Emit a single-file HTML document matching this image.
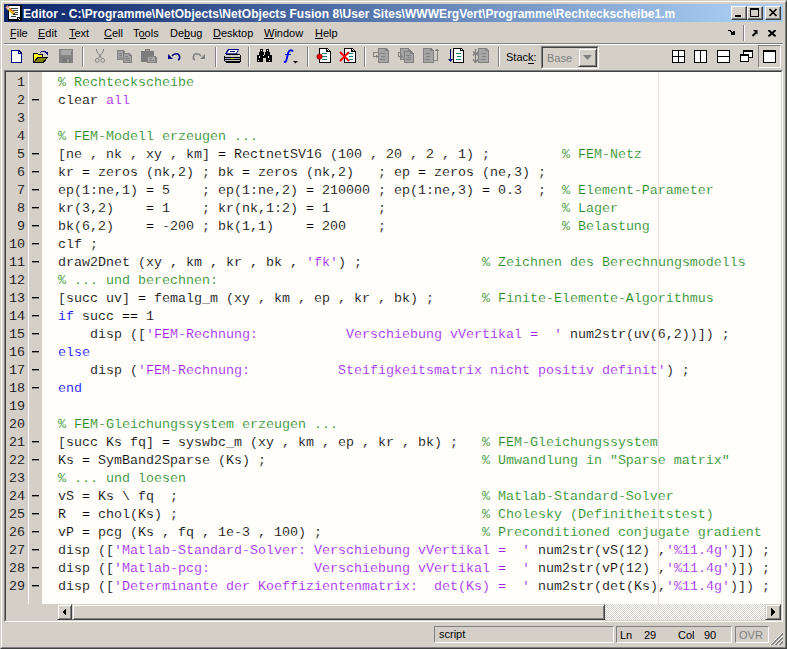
<!DOCTYPE html>
<html><head><meta charset="utf-8">
<style>
*{margin:0;padding:0;box-sizing:border-box}
html,body{width:787px;height:649px;overflow:hidden;background:#D4D0C8;font-family:"Liberation Sans",sans-serif}
.a{position:absolute}
#frame{left:0;top:0;width:787px;height:649px;border-top:1px solid #D4D0C8;border-left:1px solid #D4D0C8;border-right:1px solid #404040;border-bottom:1px solid #404040}
#frame2{left:1px;top:1px;width:785px;height:647px;border-top:1px solid #fff;border-left:1px solid #fff;border-right:1px solid #808080;border-bottom:1px solid #808080}
#title{left:4px;top:4px;width:779px;height:18px;background:linear-gradient(to right,#0A246A 0px,#A6CAF0 730px)}
#ttext{left:23px;top:4.5px;height:18px;line-height:18px;color:#fff;font-weight:bold;font-size:12px;letter-spacing:0.04px;white-space:nowrap}
.tb{width:16px;height:14px;top:6px;background:#D4D0C8;border-top:1px solid #fff;border-left:1px solid #fff;border-right:1px solid #404040;border-bottom:1px solid #404040;box-shadow:inset -1px -1px 0 #808080}
.menu{top:22.6px;height:20px;line-height:20px;font-size:11px;color:#000;white-space:nowrap}
.menu u{text-decoration:none;border-bottom:1px solid #000}
#etch{left:4px;top:43px;width:779px;height:2px;border-top:1px solid #808080;border-bottom:1px solid #fff}
.sep{top:47px;width:2px;height:20px;border-left:1px solid #808080;border-right:1px solid #fff}
#editor{left:4px;top:70px;width:779px;height:552px;border-top:1px solid #808080;border-left:1px solid #808080;border-right:1px solid #fff;border-bottom:1px solid #fff}
#editor2{left:5px;top:71px;width:777px;height:550px;border-top:1px solid #404040;border-left:1px solid #404040;border-right:1px solid #D4D0C8;border-bottom:1px solid #D4D0C8}
#gutter{left:6px;top:72px;width:22px;height:548px;background:#D4D0C8}
#gsep{left:28px;top:72px;width:1px;height:532px;background:#fff}
#code{left:42px;top:72px;width:739px;height:532px;background:#FFFEFB}
#margin{left:658px;top:72px;width:1px;height:532px;background:#EEDCDC}
pre{font-family:"Liberation Mono",monospace;font-size:13.333px;line-height:18px;white-space:pre}
#nums{left:6px;top:74px;width:19px;text-align:right;color:#000;-webkit-text-stroke:0.15px #D4D0C8}
#dash{left:31px;top:74px;color:#000}
#txt{left:58px;top:74px;color:#000;-webkit-text-stroke:0.15px #FFFEFB}
.c{color:#228B22}.s{color:#A020F0}.k{color:#0000FF}
.status{top:626px;height:17px;border-top:1px solid #808080;border-left:1px solid #808080;border-right:1px solid #fff;border-bottom:1px solid #fff;font-size:11px;line-height:15px;white-space:nowrap}

.btnp{border-top:1px solid #808080;border-left:1px solid #808080;border-right:1px solid #fff;border-bottom:1px solid #fff}
.raised{background:#D4D0C8;border-top:1px solid #D4D0C8;border-left:1px solid #D4D0C8;border-right:1px solid #404040;border-bottom:1px solid #404040;box-shadow:inset 1px 1px 0 #fff,inset -1px -1px 0 #808080}
</style></head><body>
<div id="frame" class="a"></div><div id="frame2" class="a"></div>
<div id="title" class="a"></div>
<div id="ttext" class="a">Editor - C:\Programme\NetObjects\NetObjects Fusion 8\User Sites\WWWErgVert\Programme\Rechteckscheibe1.m</div>
<div class="a tb" style="left:731px"></div>
<div class="a tb" style="left:747px"></div>
<div class="a tb" style="left:765px"></div>

<div class="a menu" style="left:10px">File</div>
<div class="a" style="left:10px;top:38px;width:6px;height:1px;background:#000"></div>
<div class="a menu" style="left:38px">Edit</div>
<div class="a" style="left:38px;top:38px;width:7px;height:1px;background:#000"></div>
<div class="a menu" style="left:69px">Text</div>
<div class="a" style="left:69px;top:38px;width:7px;height:1px;background:#000"></div>
<div class="a menu" style="left:104px">Cell</div>
<div class="a" style="left:104px;top:38px;width:8px;height:1px;background:#000"></div>
<div class="a menu" style="left:133px">Tools</div>
<div class="a" style="left:140px;top:38px;width:6px;height:1px;background:#000"></div>
<div class="a menu" style="left:170px">Debug</div>
<div class="a" style="left:184px;top:38px;width:6px;height:1px;background:#000"></div>
<div class="a menu" style="left:213px">Desktop</div>
<div class="a" style="left:213px;top:38px;width:8px;height:1px;background:#000"></div>
<div class="a menu" style="left:264px">Window</div>
<div class="a" style="left:264px;top:38px;width:10px;height:1px;background:#000"></div>
<div class="a menu" style="left:315px">Help</div>
<div class="a" style="left:315px;top:38px;width:8px;height:1px;background:#000"></div>

<div id="etch" class="a"></div>
<div class="a btnp" style="left:758px;top:45px;width:23px;height:23px"></div>
<svg class="a" style="left:0;top:0" width="787" height="72" shape-rendering="crispEdges">
<!-- title icon -->
<rect x="8" y="5" width="14" height="16" fill="#000"/>
<rect x="9" y="6" width="11" height="13" fill="#F4FAFF"/>
<rect x="11" y="8" width="7" height="1" fill="#404040"/>
<rect x="13" y="10" width="5" height="1" fill="#404040"/>
<rect x="15" y="12" width="3" height="1" fill="#404040"/>
<rect x="13" y="14" width="5" height="1" fill="#404040"/>
<rect x="11" y="16" width="5" height="1" fill="#404040"/>
<rect x="17" y="17" width="4" height="4" fill="#000"/>
<rect x="18" y="18" width="1" height="1" fill="#fff"/>
<rect x="19" y="19" width="1" height="1" fill="#D4D0C8"/>
<path d="M5.5 7.5 L7.5 5.5 L14.5 12.5 L14.5 14.5 L12.5 14.5 Z" fill="#F0B000" shape-rendering="auto"/>
<path d="M5.5 7.5 L7.5 5.5 L9 7 L7 9 Z" fill="#E890B0" shape-rendering="auto"/>
<path d="M7 9 L9 7 L10 8 L8 10 Z" fill="#E0E0E0" shape-rendering="auto"/>
<path d="M9.5 8 L13.5 12" stroke="#D03000" stroke-width="0.9" shape-rendering="auto"/>
<path d="M12.5 14.5 L14.5 12.5 L15 15 Z" fill="#202020" shape-rendering="auto"/>
<!-- title buttons glyphs -->
<rect x="735" y="15" width="6" height="2" fill="#000"/>
<rect x="750" y="8" width="9" height="9" fill="#000"/>
<rect x="751" y="10" width="7" height="6" fill="#D4D0C8"/>
<path d="M769.5 9 L776.5 16 M776.5 9 L769.5 16" stroke="#000" stroke-width="1.7" shape-rendering="auto"/>
<!-- dock icons -->
<path d="M728 30 L730 30 L733 33 L733 31 L735 31 L735 35 L731 35 L731 33 L732 33 L729 31 L728 31 Z" fill="#000"/>
<rect x="743" y="25" width="1" height="16" fill="#808080"/><rect x="744" y="25" width="1" height="16" fill="#fff"/>
<path d="M753 30 H757.5 V34.5 Z" fill="#000" shape-rendering="auto"/><path d="M752.5 36 L756 32.5" stroke="#000" stroke-width="2" shape-rendering="auto"/>
<path d="M768 30 L770 30 L772 32 L774 30 L776 30 L776 31 L773.5 33.3 L776 35.6 L776 36.6 L774 36.6 L772 34.6 L770 36.6 L768 36.6 L768 35.6 L770.5 33.3 L768 31 Z" fill="#000" shape-rendering="auto"/>
<!-- New -->
<path d="M11 50 H19 L22 53 V63 H11 Z" fill="#000080"/>
<path d="M12 51 H18 V54 H21 V62 H12 Z" fill="#fff"/>
<rect x="19" y="52" width="1" height="1" fill="#fff"/>
<!-- Open -->
<path d="M33 53 H37 L38 54 H43 V57 H48 L44 63 H33 Z" fill="#000"/>
<path d="M34 54 H37 L38 55 H42 V57 H37 L34 62 Z" fill="#FFFF00"/>
<path d="M38 58 H46 L43 62 H35 Z" fill="#808000"/>
<path d="M41 51 H46 V52 H41 Z M40 52 H41 V53 H40 Z M45 52 H48 V53 H45 Z M46 53 H48 V54 H46 Z M47 54 H48 V55 H47 Z" fill="#000080"/>
<!-- Save (disabled) -->
<rect x="59" y="49" width="14" height="14" fill="#848484"/>
<rect x="61" y="50" width="10" height="5" fill="#A8A8A8"/>
<rect x="62" y="58" width="9" height="5" fill="#7A7A7A"/>
<rect x="67" y="59" width="2" height="3" fill="#A0A0A0"/>
<rect x="71" y="50" width="1" height="1" fill="#A0A0A0"/>
<!-- Cut -->
<g fill="none" stroke="#808080" stroke-width="1" shape-rendering="auto">
<path d="M96.5 49 V51 L101.5 58 M103.5 49 V51 L98.5 58"/>
<ellipse cx="97.3" cy="60.3" rx="1.8" ry="2.1"/>
<ellipse cx="102.7" cy="60.3" rx="1.8" ry="2.1"/>
</g>
<!-- Copy -->
<path d="M117 50 H123 L125 52 V60 H117 Z" fill="#808080"/>
<rect x="118" y="51" width="5" height="8" fill="#A4A4A4"/>
<rect x="119" y="53" width="3" height="1" fill="#808080"/><rect x="119" y="55" width="3" height="1" fill="#808080"/><rect x="119" y="57" width="3" height="1" fill="#808080"/>
<path d="M123 53 H129 L132 56 V63 H123 Z" fill="#808080"/>
<path d="M124 54 H129 V56 H131 V62 H124 Z" fill="#A4A4A4"/>
<rect x="125" y="56" width="3" height="1" fill="#808080"/><rect x="125" y="58" width="5" height="1" fill="#808080"/><rect x="125" y="60" width="5" height="1" fill="#808080"/>
<!-- Paste -->
<path d="M141 51 H145 V49 H150 V51 H154 V62 H141 Z" fill="#7C7C7C"/>
<rect x="146" y="50" width="3" height="1" fill="#A0A0A0"/>
<path d="M147 56 H155 L157 58 V63 H147 Z" fill="#808080"/>
<rect x="148" y="57" width="7" height="5" fill="#A8A8A8"/>
<rect x="149" y="58" width="3" height="1" fill="#808080"/><rect x="149" y="60" width="5" height="1" fill="#808080"/>
<!-- Undo -->
<g shape-rendering="auto">
<path d="M172 56 C174 53, 179 53, 179.5 56.5 C180 58, 179 59.5, 178 60" fill="none" stroke="#000080" stroke-width="1.6"/>
<path d="M168 54 L168 59 L173 59 Z" fill="#000080"/>
<!-- Redo -->
<path d="M201 56 C199 53, 194 53, 193.5 56.5 C193 58, 194 59.5, 195 60" fill="none" stroke="#808080" stroke-width="1.6"/>
<path d="M205 54 L205 59 L200 59 Z" fill="#808080"/>
</g>
<!-- Printer -->
<path d="M228 49 H239 L237 54 H225 Z" fill="#000080" shape-rendering="auto"/>
<path d="M229.2 50 H237.6 L236.2 53.2 H227 Z" fill="#fff" shape-rendering="auto"/>
<rect x="230" y="51" width="5" height="1" fill="#000080"/>
<path d="M226 54 H239 L241 56 V61 L239 63 H226 L224 61 V56 Z" fill="#000"/>
<rect x="225" y="55" width="15" height="2" fill="#C8C8C8"/>
<rect x="225" y="58" width="15" height="1" fill="#A0A0A0"/>
<rect x="225" y="60" width="15" height="1" fill="#C8C8C8"/>
<rect x="231" y="58" width="3" height="1" fill="#FFFF00"/>
<rect x="238" y="55" width="2" height="1" fill="#fff"/>
<!-- Binoculars -->
<path d="M260 49 H263 V52 H264 V55 H265 V52 H266 V49 H269 V52 H270 V55 H272 V62 H266 V58 H263 V62 H257 V55 H259 V52 H260 Z" fill="#000"/>
<rect x="261" y="50" width="1" height="1" fill="#fff"/><rect x="267" y="50" width="1" height="1" fill="#fff"/>
<rect x="259" y="56" width="1" height="2" fill="#fff"/><rect x="268" y="56" width="1" height="2" fill="#fff"/>
<rect x="258" y="60" width="1" height="1" fill="#fff"/><rect x="269" y="60" width="1" height="1" fill="#fff"/>
<rect x="263" y="55" width="1" height="1" fill="#fff"/>
<!-- f -->
<path d="M293 51.5 C291.5 49.5, 289 50, 288.3 52.5 L286.3 60.5 C285.8 62.3, 284.8 62.3, 284 61.3" fill="none" stroke="#0000FF" stroke-width="1.9" shape-rendering="auto"/>
<rect x="285" y="53.6" width="6" height="1.6" fill="#0000FF"/>
<path d="M293 61 H298 L295.5 63.5 Z" fill="#000" shape-rendering="auto"/>
<!-- Breakpoint doc -->
<path d="M319 48 H327 L331 52 V63 H319 Z" fill="#000"/>
<path d="M320 49 H326 V52 H330 V62 H320 Z" fill="#fff"/>
<rect x="327" y="49" width="1" height="1" fill="#fff"/><rect x="328" y="50" width="1" height="1" fill="#fff"/>
<rect x="322" y="53" width="5" height="1" fill="#008080"/><rect x="322" y="56" width="5" height="1" fill="#008080"/><rect x="322" y="59" width="5" height="1" fill="#008080"/>
<circle cx="319.6" cy="56.6" r="2.7" fill="#FF0000" stroke="#600000" stroke-width="0.7" shape-rendering="auto"/>
<!-- Clear breakpoints -->
<path d="M344 48 H352 L356 52 V63 H344 Z" fill="#000"/>
<path d="M345 49 H351 V52 H355 V62 H345 Z" fill="#fff"/>
<rect x="352" y="49" width="1" height="1" fill="#fff"/><rect x="353" y="50" width="1" height="1" fill="#fff"/>
<rect x="349" y="53" width="4" height="1" fill="#008080"/><rect x="349" y="56" width="4" height="1" fill="#008080"/><rect x="349" y="59" width="4" height="1" fill="#008080"/>
<path d="M340 52 L349 61 M349 52 L340 61" stroke="#FF0000" stroke-width="1.8" shape-rendering="auto"/>
<!-- Step (gray) -->
<path d="M378 48 H386 L389 51 V63 H378 Z" fill="#808080"/>
<path d="M379 49 H385 V51 H388 V62 H379 Z" fill="#A4A4A4"/>
<rect x="380" y="53" width="5" height="1" fill="#808080"/><rect x="381" y="56" width="4" height="1" fill="#808080"/><rect x="380" y="59" width="5" height="1" fill="#808080"/>
<path d="M373 52 H378 V53 H374 V56 H376 V54 L378 56.5 L376 59 V57 H373 Z" fill="#808080"/>
<!-- Step in -->
<path d="M400 48 H408 L411 51 V60 H400 Z" fill="#808080"/>
<rect x="401" y="49" width="7" height="10" fill="#A4A4A4"/>
<path d="M404 51 H411 L414 54 V63 H404 Z" fill="#808080"/>
<path d="M405 52 H410 V54 H413 V62 H405 Z" fill="#A4A4A4"/>
<rect x="406" y="55" width="5" height="1" fill="#808080"/><rect x="407" y="57" width="4" height="1" fill="#808080"/><rect x="406" y="59" width="5" height="1" fill="#808080"/>
<path d="M398 52 H401 V53 H399 V56 H401 V54 L403 56.5 L401 59 V57 H398 Z" fill="#808080"/>
<!-- Step out -->
<path d="M423 48 H431 L434 51 V63 H423 Z" fill="#808080"/>
<path d="M424 49 H430 V51 H433 V62 H424 Z" fill="#A4A4A4"/>
<rect x="425" y="53" width="5" height="1" fill="#808080"/><rect x="426" y="56" width="4" height="1" fill="#808080"/><rect x="425" y="59" width="5" height="1" fill="#808080"/>
<path d="M437 48 L439.5 51 H438 V61 H434 V60 H437 V51 H434.5 Z" fill="#808080"/>
<!-- Continue -->
<rect x="450" y="49" width="1" height="12" fill="#000080"/>
<path d="M448 59 H453 L450.5 62 Z" fill="#000080" shape-rendering="auto"/>
<path d="M453 48 H461 L464 51 V63 H453 Z" fill="#000"/>
<path d="M454 49 H460 V51 H463 V62 H454 Z" fill="#fff"/>
<rect x="461" y="49" width="1" height="1" fill="#fff"/>
<rect x="456" y="53" width="5" height="1" fill="#008080"/><rect x="457" y="56" width="4" height="1" fill="#008080"/><rect x="456" y="59" width="5" height="1" fill="#008080"/>
<!-- Exit -->
<path d="M478 48 H486 L489 51 V63 H478 Z" fill="#808080"/>
<path d="M479 49 H485 V51 H488 V62 H479 Z" fill="#A8A8A8"/>
<rect x="486" y="49" width="1" height="1" fill="#A8A8A8"/>
<rect x="481" y="53" width="5" height="1" fill="#808080"/><rect x="482" y="56" width="4" height="1" fill="#808080"/><rect x="481" y="59" width="5" height="1" fill="#808080"/>
<g stroke="#808080" stroke-width="1.4" fill="none" shape-rendering="auto">
<path d="M475.5 49 V62.5"/>
<path d="M473 51.5 L475.5 54.5 L478.5 51.5"/>
<path d="M473 55.5 L475.5 53 L479 56"/>
<path d="M473 59.5 L475.5 62.5 L478 59.5"/>
</g>
<!-- layout icons -->
<rect x="672" y="50" width="13" height="13" fill="#000"/>
<rect x="673" y="51" width="5" height="5" fill="#fff"/><rect x="679" y="51" width="5" height="5" fill="#fff"/>
<rect x="673" y="57" width="5" height="5" fill="#fff"/><rect x="679" y="57" width="5" height="5" fill="#fff"/>
<rect x="694" y="50" width="13" height="13" fill="#000"/>
<rect x="695" y="51" width="5" height="11" fill="#fff"/><rect x="701" y="51" width="5" height="11" fill="#fff"/>
<rect x="717" y="50" width="13" height="13" fill="#000"/>
<rect x="718" y="51" width="11" height="5" fill="#fff"/><rect x="718" y="57" width="11" height="5" fill="#fff"/>
<rect x="743" y="50" width="10" height="8" fill="#000"/>
<rect x="744" y="52" width="8" height="5" fill="#fff"/>
<rect x="740" y="54" width="9" height="8" fill="#000"/>
<rect x="741" y="56" width="7" height="5" fill="#fff"/>
<rect x="763" y="50" width="13" height="13" fill="#000"/>
<rect x="764" y="52" width="11" height="10" fill="#fff"/>
</svg>

<div class="a" style="left:506px;top:46px;height:22px;line-height:22px;font-size:11px;white-space:nowrap">Stack:</div><div class="a" style="left:528px;top:63px;width:6px;height:1px;background:#000"></div>
<div class="a btnp" style="left:541px;top:46px;width:58px;height:23px"></div>
<div class="a" style="left:542px;top:47px;width:56px;height:21px;border-top:1px solid #404040;border-left:1px solid #404040;border-right:1px solid #D4D0C8;border-bottom:1px solid #D4D0C8"></div>
<div class="a" style="left:547px;top:49px;height:19px;line-height:19px;font-size:11px;color:#808080">Base</div>
<div class="a raised" style="left:578px;top:48px;width:19px;height:19px"></div>
<svg class="a" style="left:578px;top:48px" width="19" height="19"><path d="M5 7 H14 L9.5 12 Z" fill="#808080"/></svg>

<div class="a sep" style="left:82px"></div>
<div class="a sep" style="left:215px"></div>
<div class="a sep" style="left:248px"></div>
<div class="a sep" style="left:307px"></div>
<div class="a sep" style="left:364px"></div>
<div class="a sep" style="left:498px"></div>

<div id="editor" class="a"></div><div id="editor2" class="a"></div>
<div id="gutter" class="a"></div>
<div class="a" style="left:29px;top:72px;width:13px;height:548px;background:#D4D0C8"></div>
<div id="gsep" class="a"></div>
<div id="code" class="a"></div>
<div id="margin" class="a"></div>

<div class="a raised" style="left:57px;top:604px;width:15px;height:16px"></div>
<svg class="a" style="left:57px;top:604px" width="15" height="16"><path d="M9 4 V12 L5 8 Z" fill="#000" shape-rendering="crispEdges"/></svg>
<div class="a" style="left:72px;top:604px;width:693px;height:16px;background-color:#EAE8E4;background-image:repeating-conic-gradient(#fff 0 25%,#D4D0C8 0 50%);background-size:2px 2px"></div>
<div class="a raised" style="left:72px;top:604px;width:533px;height:16px"></div>
<div class="a raised" style="left:765px;top:604px;width:16px;height:16px"></div>
<svg class="a" style="left:765px;top:604px" width="16" height="16"><path d="M6 4 V12 L10 8 Z" fill="#000" shape-rendering="crispEdges"/></svg>
<pre id="nums" class="a">1
2
3
4
5
6
7
8
9
10
11
12
13
14
15
16
17
18
19
20
21
22
23
24
25
26
27
28
29</pre>
<div class="a" style="left:32px;top:99px;width:7px;height:1px;background:#000;box-shadow:0 1px 0 #8A8884"></div><div class="a" style="left:32px;top:153px;width:7px;height:1px;background:#000;box-shadow:0 1px 0 #8A8884"></div><div class="a" style="left:32px;top:171px;width:7px;height:1px;background:#000;box-shadow:0 1px 0 #8A8884"></div><div class="a" style="left:32px;top:189px;width:7px;height:1px;background:#000;box-shadow:0 1px 0 #8A8884"></div><div class="a" style="left:32px;top:207px;width:7px;height:1px;background:#000;box-shadow:0 1px 0 #8A8884"></div><div class="a" style="left:32px;top:225px;width:7px;height:1px;background:#000;box-shadow:0 1px 0 #8A8884"></div><div class="a" style="left:32px;top:243px;width:7px;height:1px;background:#000;box-shadow:0 1px 0 #8A8884"></div><div class="a" style="left:32px;top:261px;width:7px;height:1px;background:#000;box-shadow:0 1px 0 #8A8884"></div><div class="a" style="left:32px;top:297px;width:7px;height:1px;background:#000;box-shadow:0 1px 0 #8A8884"></div><div class="a" style="left:32px;top:315px;width:7px;height:1px;background:#000;box-shadow:0 1px 0 #8A8884"></div><div class="a" style="left:32px;top:333px;width:7px;height:1px;background:#000;box-shadow:0 1px 0 #8A8884"></div><div class="a" style="left:32px;top:351px;width:7px;height:1px;background:#000;box-shadow:0 1px 0 #8A8884"></div><div class="a" style="left:32px;top:369px;width:7px;height:1px;background:#000;box-shadow:0 1px 0 #8A8884"></div><div class="a" style="left:32px;top:387px;width:7px;height:1px;background:#000;box-shadow:0 1px 0 #8A8884"></div><div class="a" style="left:32px;top:441px;width:7px;height:1px;background:#000;box-shadow:0 1px 0 #8A8884"></div><div class="a" style="left:32px;top:459px;width:7px;height:1px;background:#000;box-shadow:0 1px 0 #8A8884"></div><div class="a" style="left:32px;top:495px;width:7px;height:1px;background:#000;box-shadow:0 1px 0 #8A8884"></div><div class="a" style="left:32px;top:513px;width:7px;height:1px;background:#000;box-shadow:0 1px 0 #8A8884"></div><div class="a" style="left:32px;top:531px;width:7px;height:1px;background:#000;box-shadow:0 1px 0 #8A8884"></div><div class="a" style="left:32px;top:549px;width:7px;height:1px;background:#000;box-shadow:0 1px 0 #8A8884"></div><div class="a" style="left:32px;top:567px;width:7px;height:1px;background:#000;box-shadow:0 1px 0 #8A8884"></div><div class="a" style="left:32px;top:585px;width:7px;height:1px;background:#000;box-shadow:0 1px 0 #8A8884"></div>
<pre id="txt" class="a"><span class="c">% Rechteckscheibe</span>
clear <span class="s">all</span>
 
<span class="c">% FEM-Modell erzeugen ...</span>
[ne , nk , xy , km] = RectnetSV16 (100 , 20 , 2 , 1) ;         <span class="c">% FEM-Netz</span>
kr = zeros (nk,2) ; bk = zeros (nk,2)   ; ep = zeros (ne,3) ;
ep(1:ne,1) = 5    ; ep(1:ne,2) = 210000 ; ep(1:ne,3) = 0.3  ;  <span class="c">% Element-Parameter</span>
kr(3,2)    = 1    ; kr(nk,1:2) = 1      ;                      <span class="c">% Lager</span>
bk(6,2)    = -200 ; bk(1,1)    = 200    ;                      <span class="c">% Belastung</span>
clf ;
draw2Dnet (xy , km , kr , bk , <span class="s">&#x27;fk&#x27;</span>) ;               <span class="c">% Zeichnen des Berechnungsmodells</span>
<span class="c">% ... und berechnen:</span>
[succ uv] = femalg_m (xy , km , ep , kr , bk) ;      <span class="c">% Finite-Elemente-Algorithmus</span>
<span class="k">if</span> succ == 1
    disp ([<span class="s">&#x27;FEM-Rechnung:           Verschiebung vVertikal =  &#x27;</span> num2str(uv(6,2))]) ;
<span class="k">else</span>
    disp (<span class="s">&#x27;FEM-Rechnung:           Steifigkeitsmatrix nicht positiv definit&#x27;</span>) ;
<span class="k">end</span>
 
<span class="c">% FEM-Gleichungssystem erzeugen ...</span>
[succ Ks fq] = syswbc_m (xy , km , ep , kr , bk) ;   <span class="c">% FEM-Gleichungssystem</span>
Ks = SymBand2Sparse (Ks) ;                           <span class="c">% Umwandlung in &quot;Sparse matrix&quot;</span>
<span class="c">% ... und loesen</span>
vS = Ks \ fq  ;                                      <span class="c">% Matlab-Standard-Solver</span>
R  = chol(Ks) ;                                      <span class="c">% Cholesky (Definitheitstest)</span>
vP = pcg (Ks , fq , 1e-3 , 100) ;                    <span class="c">% Preconditioned conjugate gradient</span>
disp ([<span class="s">&#x27;Matlab-Standard-Solver: Verschiebung vVertikal =  &#x27;</span> num2str(vS(12) ,<span class="s">&#x27;%11.4g&#x27;</span>)]) ;
disp ([<span class="s">&#x27;Matlab-pcg:             Verschiebung vVertikal =  &#x27;</span> num2str(vP(12) ,<span class="s">&#x27;%11.4g&#x27;</span>)]) ;
disp ([<span class="s">&#x27;Determinante der Koeffizientenmatrix:  det(Ks) =  &#x27;</span> num2str(det(Ks),<span class="s">&#x27;%11.4g&#x27;</span>)]) ;</pre>


<div class="a status" style="left:434px;width:180px"><span style="margin-left:4px">script</span></div>
<div class="a status" style="left:616px;width:116px"><span class="a" style="left:3px;top:1px">Ln</span><span class="a" style="left:27px;top:1px">29</span><span class="a" style="left:61px;top:1px">Col</span><span class="a" style="left:87px;top:1px">90</span></div>
<div class="a status" style="left:735px;width:34px;color:#808080"><span class="a" style="left:3px;top:1px">OVR</span></div>
<svg class="a" style="left:769px;top:631px" width="15" height="15" shape-rendering="crispEdges"><rect x="1" y="13" width="1" height="1" fill="#fff"/><rect x="2" y="12" width="1" height="1" fill="#fff"/><rect x="3" y="11" width="1" height="1" fill="#fff"/><rect x="4" y="10" width="1" height="1" fill="#fff"/><rect x="5" y="9" width="1" height="1" fill="#fff"/><rect x="6" y="8" width="1" height="1" fill="#fff"/><rect x="7" y="7" width="1" height="1" fill="#fff"/><rect x="8" y="6" width="1" height="1" fill="#fff"/><rect x="9" y="5" width="1" height="1" fill="#fff"/><rect x="10" y="4" width="1" height="1" fill="#fff"/><rect x="11" y="3" width="1" height="1" fill="#fff"/><rect x="12" y="2" width="1" height="1" fill="#fff"/><rect x="13" y="1" width="1" height="1" fill="#fff"/><rect x="2" y="13" width="1" height="1" fill="#808080"/><rect x="3" y="12" width="1" height="1" fill="#808080"/><rect x="4" y="11" width="1" height="1" fill="#808080"/><rect x="5" y="10" width="1" height="1" fill="#808080"/><rect x="6" y="9" width="1" height="1" fill="#808080"/><rect x="7" y="8" width="1" height="1" fill="#808080"/><rect x="8" y="7" width="1" height="1" fill="#808080"/><rect x="9" y="6" width="1" height="1" fill="#808080"/><rect x="10" y="5" width="1" height="1" fill="#808080"/><rect x="11" y="4" width="1" height="1" fill="#808080"/><rect x="12" y="3" width="1" height="1" fill="#808080"/><rect x="13" y="2" width="1" height="1" fill="#808080"/><rect x="3" y="13" width="1" height="1" fill="#808080"/><rect x="4" y="12" width="1" height="1" fill="#808080"/><rect x="5" y="11" width="1" height="1" fill="#808080"/><rect x="6" y="10" width="1" height="1" fill="#808080"/><rect x="7" y="9" width="1" height="1" fill="#808080"/><rect x="8" y="8" width="1" height="1" fill="#808080"/><rect x="9" y="7" width="1" height="1" fill="#808080"/><rect x="10" y="6" width="1" height="1" fill="#808080"/><rect x="11" y="5" width="1" height="1" fill="#808080"/><rect x="12" y="4" width="1" height="1" fill="#808080"/><rect x="13" y="3" width="1" height="1" fill="#808080"/><rect x="5" y="13" width="1" height="1" fill="#fff"/><rect x="6" y="12" width="1" height="1" fill="#fff"/><rect x="7" y="11" width="1" height="1" fill="#fff"/><rect x="8" y="10" width="1" height="1" fill="#fff"/><rect x="9" y="9" width="1" height="1" fill="#fff"/><rect x="10" y="8" width="1" height="1" fill="#fff"/><rect x="11" y="7" width="1" height="1" fill="#fff"/><rect x="12" y="6" width="1" height="1" fill="#fff"/><rect x="13" y="5" width="1" height="1" fill="#fff"/><rect x="6" y="13" width="1" height="1" fill="#808080"/><rect x="7" y="12" width="1" height="1" fill="#808080"/><rect x="8" y="11" width="1" height="1" fill="#808080"/><rect x="9" y="10" width="1" height="1" fill="#808080"/><rect x="10" y="9" width="1" height="1" fill="#808080"/><rect x="11" y="8" width="1" height="1" fill="#808080"/><rect x="12" y="7" width="1" height="1" fill="#808080"/><rect x="13" y="6" width="1" height="1" fill="#808080"/><rect x="7" y="13" width="1" height="1" fill="#808080"/><rect x="8" y="12" width="1" height="1" fill="#808080"/><rect x="9" y="11" width="1" height="1" fill="#808080"/><rect x="10" y="10" width="1" height="1" fill="#808080"/><rect x="11" y="9" width="1" height="1" fill="#808080"/><rect x="12" y="8" width="1" height="1" fill="#808080"/><rect x="13" y="7" width="1" height="1" fill="#808080"/><rect x="9" y="13" width="1" height="1" fill="#fff"/><rect x="10" y="12" width="1" height="1" fill="#fff"/><rect x="11" y="11" width="1" height="1" fill="#fff"/><rect x="12" y="10" width="1" height="1" fill="#fff"/><rect x="13" y="9" width="1" height="1" fill="#fff"/><rect x="10" y="13" width="1" height="1" fill="#808080"/><rect x="11" y="12" width="1" height="1" fill="#808080"/><rect x="12" y="11" width="1" height="1" fill="#808080"/><rect x="13" y="10" width="1" height="1" fill="#808080"/><rect x="11" y="13" width="1" height="1" fill="#808080"/><rect x="12" y="12" width="1" height="1" fill="#808080"/><rect x="13" y="11" width="1" height="1" fill="#808080"/></svg>
</body></html>
